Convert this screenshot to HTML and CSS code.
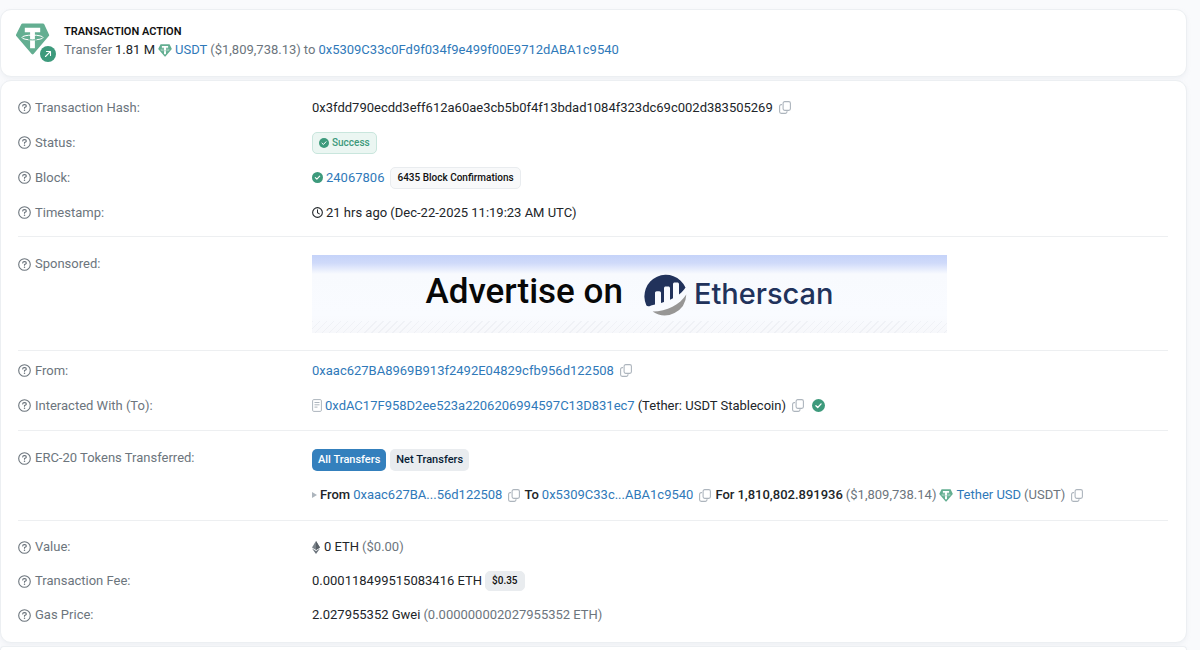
FILE: index.html
```html
<!DOCTYPE html>
<html lang="en">
<head>
    <meta charset="UTF-8">
    <meta name="viewport" content="width=device-width, initial-scale=1.0">
    <title>Transaction Details</title>
    <link rel="stylesheet" href="styles.css">
</head>
<body>
    <!-- Icons -->
    <svg class="sprite" aria-hidden="true">
        <symbol id="help" viewBox="0 0 13 13">
            <circle cx="6.5" cy="6.5" r="5.8" fill="none" stroke="currentColor" stroke-width="1.1"/>
            <path d="M4.7 5c0-.8.6-1.4 1.4-1.4h.8c.8 0 1.4.6 1.4 1.3 0 .5-.3.9-.7 1.1l-1.1.6v.6" fill="none" stroke="currentColor" stroke-width="1.1" stroke-linecap="round"/>
            <circle cx="6.5" cy="9.2" r=".75" fill="currentColor"/>
        </symbol>
        <symbol id="copy" viewBox="0 0 12 13">
            <rect x="4.1" y=".6" width="7.3" height="8.8" rx="1.6" fill="none" stroke="currentColor" stroke-width="1.1"/>
            <path d="M2.6 3.6h-.4C1.3 3.6.6 4.3.6 5.2v5.6c0 .9.7 1.6 1.6 1.6h4.2c.9 0 1.6-.7 1.6-1.6v-.2" fill="none" stroke="currentColor" stroke-width="1.1" stroke-linecap="round"/>
        </symbol>
        <symbol id="check" viewBox="0 0 12 12">
            <circle cx="6" cy="6" r="6" fill="#3d9a7c"/>
            <path d="M3.6 6.2l1.7 1.6 3.1-3.3" fill="none" stroke="#fff" stroke-width="1.2" stroke-linecap="round" stroke-linejoin="round"/>
        </symbol>
        <symbol id="clock" viewBox="0 0 12 12">
            <circle cx="6" cy="6" r="5.3" fill="none" stroke="currentColor" stroke-width="1.2"/>
            <path d="M6 3v3.2l2 1.3" fill="none" stroke="currentColor" stroke-width="1.1" stroke-linecap="round"/>
        </symbol>
        <symbol id="contract" viewBox="0 0 10 13">
            <rect x=".6" y=".6" width="8.8" height="11.8" rx="1.2" fill="none" stroke="currentColor"/>
            <path d="M2.5 3.5h5M2.5 5.8h5M2.5 8.1h3" stroke="currentColor"/>
        </symbol>
        <symbol id="tether" viewBox="0 0 34 32">
            <path d="M7 .5h20.5c.5 0 .9.2 1.1.6l5 10.6c.2.5.1 1-.3 1.4L18 31c-.5.5-1.3.5-1.8 0L.8 13.100c-.4-.4-.5-.9-.3-1.4L5.8 1.2C6 .7 6.500.5 7 .5z" fill="#63ae91"/>
            <ellipse cx="17" cy="14.5" rx="10.5" ry="2.4" fill="none" stroke="#fff" stroke-width="1"/>
            <path d="M9.3 4.8h15.4v4.4h-5.3v16h-4.8v-16H9.3z" fill="#fff"/>
            <path d="M13 16.7c2.5.3 5.5.3 8 0" fill="none" stroke="#63ae91" stroke-width="1"/>
        </symbol>
        <symbol id="eth" viewBox="0 0 8 13">
            <path d="M4 0L0 6.600 4 9l4-2.4z" fill="#7b838a"/>
            <path d="M4 0v9l4-2.4z" fill="#596067"/>
            <path d="M0 7.600L4 13l4-5.400-4 2.400z" fill="#6c757d"/>
        </symbol>
    </svg>

    <main class="page">
        <section class="card action">
            <div class="action-icon">
                <svg class="token-logo"><use href="#tether"/></svg>
                <svg class="action-badge" viewBox="0 0 16 16">
                    <circle cx="8" cy="8" r="8" fill="#3d9a7c"/>
                    <path d="M5.5 10.5l4.8-4.8M6.5 5.5h4v4" fill="none" stroke="#fff" stroke-width="1.1" stroke-linecap="round" stroke-linejoin="round"/>
                </svg>
            </div>
            <div class="action-text">
                <h1>TRANSACTION ACTION</h1>
                <p class="line muted">
                    <span>Transfer</span>
                    <span class="dark">1.81 M</span>
                    <svg class="icon-token"><use href="#tether"/></svg>
                    <a href="#">USDT</a>
                    <span>($1,809,738.13)</span>
                    <span>to</span>
                    <a href="#">0x5309C33c0Fd9f034f9e499f00E9712dABA1c9540</a>
                </p>
            </div>
        </section>

        <section class="card details">
            <dl class="group overview">
                <div class="row">
                    <dt><svg class="icon-help"><use href="#help"/></svg>Transaction Hash:</dt>
                    <dd class="line">
                        <span>0x3fdd790ecdd3eff612a60ae3cb5b0f4f13bdad1084f323dc69c002d383505269</span>
                        <button class="copy" aria-label="Copy hash"><svg><use href="#copy"/></svg></button>
                    </dd>
                </div>
                <div class="row">
                    <dt><svg class="icon-help"><use href="#help"/></svg>Status:</dt>
                    <dd class="line">
                        <span class="badge success"><svg class="icon-check small"><use href="#check"/></svg>Success</span>
                    </dd>
                </div>
                <div class="row">
                    <dt><svg class="icon-help"><use href="#help"/></svg>Block:</dt>
                    <dd class="line">
                        <svg class="icon-check"><use href="#check"/></svg>
                        <a href="#">24067806</a>
                        <span class="badge confirmations">6435 Block Confirmations</span>
                    </dd>
                </div>
                <div class="row">
                    <dt><svg class="icon-help"><use href="#help"/></svg>Timestamp:</dt>
                    <dd class="line">
                        <svg class="icon-check"><use href="#clock"/></svg>
                        <span>21 hrs ago (Dec-22-2025 11:19:23 AM UTC)</span>
                    </dd>
                </div>
            </dl>

            <dl class="group sponsored">
                <div class="row top">
                    <dt><svg class="icon-help"><use href="#help"/></svg>Sponsored:</dt>
                    <dd>
                        <a class="banner" href="#">
                            <span class="banner-text">Advertise on</span>
                            <span class="brand">
                                <svg class="brand-logo" viewBox="0 0 44 44">
                                    <path d="M8 33.5c-.8.8-3.500 1.200-4.700-.3A21.500 21.500 0 1 1 42.500 15.500C41.500 17.500 39 20 36 22.500V12.200c0-1-.7-1.700-1.700-1.700h-2.600c-1 0-1.700.7-1.700 1.700v14l-3 1.500V16.200c0-1-.7-1.700-1.700-1.700h-2.600c-1 0-1.700.7-1.700 1.700V30l-3 .9V21c0-1-.7-1.700-1.700-1.700h-2.600c-1 0-1.700.7-1.700 1.700v11.500z" fill="#21325b"/>
                                    <path d="M43.3 22.500A21.500 21.500 0 0 1 9.600 39.500C24 39.500 37 32.500 43.300 22.500z" fill="#979695"/>
                                </svg>
                                <span>Etherscan</span>
                            </span>
                        </a>
                    </dd>
                </div>
            </dl>

            <dl class="group parties">
                <div class="row">
                    <dt><svg class="icon-help"><use href="#help"/></svg>From:</dt>
                    <dd class="line">
                        <a href="#">0xaac627BA8969B913f2492E04829cfb956d122508</a>
                        <button class="copy" aria-label="Copy address"><svg><use href="#copy"/></svg></button>
                    </dd>
                </div>
                <div class="row">
                    <dt><svg class="icon-help"><use href="#help"/></svg>Interacted With (To):</dt>
                    <dd class="line">
                        <svg class="icon-contract"><use href="#contract"/></svg>
                        <a href="#">0xdAC17F958D2ee523a2206206994597C13D831ec7</a>
                        <span>(Tether: USDT Stablecoin)</span>
                        <button class="copy" aria-label="Copy address"><svg><use href="#copy"/></svg></button>
                        <svg class="icon-check verified"><use href="#check"/></svg>
                    </dd>
                </div>
            </dl>

            <dl class="group tokens">
                <div class="row top">
                    <dt><svg class="icon-help"><use href="#help"/></svg>ERC-20 Tokens Transferred:</dt>
                    <dd>
                        <div class="tabs">
                            <button class="tab active">All Transfers</button>
                            <button class="tab">Net Transfers</button>
                        </div>
                        <div class="line transfer">
                            <span class="caret"></span>
                            <b>From</b>
                            <a href="#">0xaac627BA...56d122508</a>
                            <button class="copy" aria-label="Copy sender"><svg><use href="#copy"/></svg></button>
                            <b>To</b>
                            <a href="#">0x5309C33c...ABA1c9540</a>
                            <button class="copy" aria-label="Copy receiver"><svg><use href="#copy"/></svg></button>
                            <b>For</b>
                            <span class="amount">1,810,802.891936</span>
                            <span class="muted">($1,809,738.14)</span>
                            <svg class="icon-token"><use href="#tether"/></svg>
                            <a href="#">Tether USD</a>
                            <span class="muted">(USDT)</span>
                            <button class="copy" aria-label="Copy token"><svg><use href="#copy"/></svg></button>
                        </div>
                    </dd>
                </div>
            </dl>

            <dl class="group fees">
                <div class="row">
                    <dt><svg class="icon-help"><use href="#help"/></svg>Value:</dt>
                    <dd class="line">
                        <svg class="icon-eth"><use href="#eth"/></svg>
                        <span>0 ETH</span>
                        <span class="muted">($0.00)</span>
                    </dd>
                </div>
                <div class="row">
                    <dt><svg class="icon-help"><use href="#help"/></svg>Transaction Fee:</dt>
                    <dd class="line">
                        <span>0.000118499515083416 ETH</span>
                        <span class="badge price">$0.35</span>
                    </dd>
                </div>
                <div class="row">
                    <dt><svg class="icon-help"><use href="#help"/></svg>Gas Price:</dt>
                    <dd class="line">
                        <span>2.027955352 Gwei</span>
                        <span class="muted">(0.000000002027955352 ETH)</span>
                    </dd>
                </div>
            </dl>
        </section>

        <section class="card next"></section>
    </main>
</body>
</html>
```
FILE: styles.css
```css
* {
    box-sizing: border-box;
}
body {
    margin: 0;
    font-family: Roboto, "Liberation Sans", sans-serif;
    font-size: 13px;
    line-height: 18px;
    color: #212529;
    background-color: #f9fafc;
}
.sprite {
    display: none;
}
svg {
    flex-shrink: 0;
}
a {
    color: #2f79b9;
    text-decoration: none;
}
button {
    font-family: inherit;
    border: none;
    cursor: pointer;
}
.page {
    display: flex;
    flex-direction: column;
    gap: 3px;
    min-height: 100vh;
    padding: 9px 13px 0 0;
}
.card {
    background-color: white;
    border: 1px solid #eceff2;
    border-radius: 11px;
    box-shadow: 0 2px 4px rgba(180, 190, 200, 0.15);
}
.line {
    display: flex;
    align-items: center;
    gap: 3px;
    white-space: nowrap;
}
.muted {
    color: #6c757d;
}
.dark {
    color: #212529;
}

/* Transaction action */
.action {
    display: flex;
    gap: 7px;
    padding: 13px 14px;
}
.action-icon {
    position: relative;
    width: 42px;
    height: 40px;
}
.token-logo {
    width: 35px;
    height: 32px;
}
.action-badge {
    position: absolute;
    right: 1px;
    bottom: 1px;
    width: 16px;
    height: 16px;
}
h1 {
    margin: 0;
    font-size: 11px;
    font-weight: 600;
    line-height: 18px;
    color: #111;
}
.action-text p {
    margin: 0;
}
.icon-token {
    width: 14px;
    height: 13px;
}

/* Details */
.details {
    padding: 9px 18px 10px 17px;
}
.group {
    margin: 0;
    border-bottom: 1px solid #edeff1;
}
.overview {
    padding-bottom: 6px;
}
.sponsored {
    padding: 18px 0 17px;
}
.parties {
    padding: 2px 0 7px;
}
.tokens {
    padding: 18px 0 13px;
}
.fees {
    padding-top: 9px;
    border-bottom: none;
}
.row {
    display: grid;
    grid-template-columns: 294px 1fr;
    align-items: center;
    height: 35px;
}
.fees .row {
    height: 34px;
}
.row.top {
    align-items: start;
    height: auto;
}
dt {
    display: flex;
    align-items: center;
    gap: 4px;
    color: #6c757d;
}
dd {
    margin: 0;
}
.icon-help {
    width: 13px;
    height: 13px;
}
.icon-check {
    width: 11px;
    height: 11px;
}
.icon-check.small {
    width: 10px;
    height: 10px;
}
.icon-check.verified {
    width: 13px;
    height: 13px;
    margin-left: 4px;
}
.icon-contract {
    width: 10px;
    height: 13px;
    color: #adb5bd;
}
.icon-eth {
    width: 8px;
    height: 13px;
    margin-right: 1px;
}
.copy {
    display: flex;
    margin: 0 1px 0 3px;
    padding: 0;
    color: #adb5bd;
    background: none;
}
.copy svg {
    width: 12px;
    height: 13px;
}

.badge {
    display: flex;
    align-items: center;
    gap: 3px;
    padding: 0 6px;
    font-size: 10px;
    font-weight: 500;
    line-height: 20px;
    border: 1px solid #e9ecef;
    border-radius: 5px;
    background-color: #f8f9fa;
    color: #111;
}
.success {
    color: #3d9a7c;
    border-color: #c9e6dd;
    background-color: #ebf6f2;
}
.confirmations {
    margin-left: 3px;
}
.price {
    line-height: 18px;
    background-color: #e9ecef;
}

/* Banner */
.banner {
    display: flex;
    align-items: center;
    justify-content: center;
    gap: 20px;
    max-width: 635px;
    height: 78px;
    background:
        repeating-linear-gradient(135deg, rgba(220, 223, 230, 0.3) 0 1px, transparent 1px 5px) bottom / 100% 12px no-repeat,
        linear-gradient(#c5d3f9 0, #cfdafa 8px, #f8fafe 19px, #f9fbff 60px, #f7f8fb 100%);
}
.banner-text {
    padding-bottom: 4px;
    font-size: 35px;
    font-weight: 500;
    line-height: 40px;
    color: #080808;
}
.brand {
    display: flex;
    align-items: center;
    gap: 7px;
    font-family: Inter, "Liberation Sans", sans-serif;
    font-size: 29px;
    font-weight: 500;
    line-height: 40px;
    color: #21325b;
}
.brand-logo {
    width: 44px;
    height: 44px;
}

/* Token transfers */
.tabs {
    display: flex;
    gap: 4px;
}
.tab {
    padding: 0 6px;
    font-size: 11px;
    font-weight: 500;
    line-height: 22px;
    color: #081d35;
    background-color: #e9ecef;
    border-radius: 5px;
}
.tab.active {
    color: white;
    background-color: #3480bd;
}
.transfer {
    margin-top: 12px;
    height: 24px;
}
b,
.amount {
    font-weight: 500;
}
.caret {
    border: 3px solid transparent;
    border-left: 5px solid #adb5bd;
    border-right: none;
}

.next {
    flex: 1;
    border-bottom: none;
    border-radius: 11px 11px 0 0;
}
```
